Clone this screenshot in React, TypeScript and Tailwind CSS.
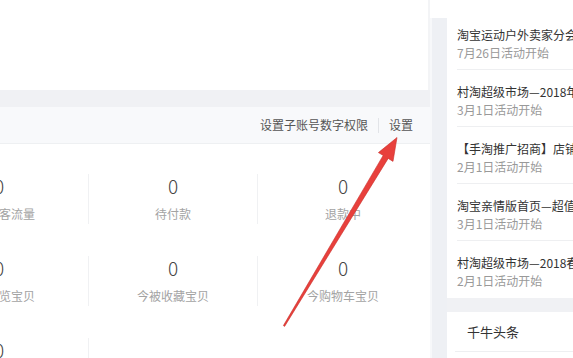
import React from "react";

const font = { fontFamily: '"Noto Sans CJK SC", "Noto Sans", sans-serif' };

type Stat = { value: string; label: string; line?: boolean };

const stats: Stat[][] = [
  [
    { value: "0", label: "今日访客流量" },
    { value: "0", label: "待付款", line: true },
    { value: "0", label: "退款中", line: true },
  ],
  [
    { value: "0", label: "今被浏览宝贝" },
    { value: "0", label: "今被收藏宝贝", line: true },
    { value: "0", label: "今购物车宝贝", line: true },
  ],
  [
    { value: "0", label: "" },
    { value: "", label: "", line: true },
    { value: "", label: "" },
  ],
];

const activities = [
  { title: "淘宝运动户外卖家分会场招商", date: "7月26日活动开始" },
  { title: "村淘超级市场—2018年货节", date: "3月1日活动开始" },
  { title: "【手淘推广招商】店铺精选", date: "2月1日活动开始" },
  { title: "淘宝亲情版首页—超值好货", date: "3月1日活动开始" },
  { title: "村淘超级市场—2018春茶节", date: "2月1日活动开始" },
];

function Arrow() {
  // red annotation arrow pointing at "设置"
  return (
    <svg
      className="pointer-events-none absolute left-0 top-0"
      width="573"
      height="358"
      viewBox="0 0 573 358"
    >
      <polygon
        points="284.6,326.4 388.2,158.4 393,161.4 397,137.5 378.4,152.6 383.2,155.4 283.4,325.6"
        fill="#e8403c"
        stroke="#c9302c"
        strokeWidth="0.6"
        strokeLinejoin="round"
      />
    </svg>
  );
}

export default function App() {
  return (
    <div
      className="relative flex h-[358px] w-[573px] overflow-hidden bg-[#f0f1f4]"
      style={font}
    >
      {/* Main column */}
      <div className="w-[430px] shrink-0 overflow-hidden">
        <div className="h-[90px] border-r-2 border-[#f3f4f6] bg-white" />
        <div className="mt-[17px] bg-white">
          {/* Card header */}
          <div className="flex h-[37px] items-center justify-end border-b border-[#eef0f2] bg-[#f8f9fb] pr-[17px] text-[12px] text-[#555]">
            <span>设置子账号数字权限</span>
            <span className="mx-[10px] h-[15px] w-px bg-[#e2e4e8]" />
            <span>设置</span>
          </div>
          {/* Stats grid */}
          <div className="ml-[-90px] flex w-[518px] flex-col gap-[32px] pt-[30px] pb-[20px]">
            {stats.map((row, i) => (
              <div key={i} className="grid grid-cols-[178px_169px_171px]">
                {row.map((s, j) => (
                  <div
                    key={j}
                    className={`flex h-[50px] flex-col items-center ${
                      s.line ? "border-l border-[#f0f1f3]" : ""
                    }`}
                  >
                    <span className="mt-[1px] text-[19px] leading-[22px] font-light text-[#444]">
                      {s.value}
                    </span>
                    <span className="mt-[9px] text-[12px] leading-[16px] text-[#a3a3a3]">
                      {s.label}
                    </span>
                  </div>
                ))}
              </div>
            ))}
          </div>
        </div>
      </div>

      {/* Gap strip */}
      <div className="flex w-[17px] shrink-0 flex-col">
        <div className="h-[18px] bg-white" />
        <div className="flex-1 border-l-2 border-[#f7f8fa] bg-[#eef0f4]" />
      </div>

      {/* Sidebar */}
      <div className="flex w-[200px] shrink-0 flex-col">
        <div className="bg-white pt-[13px]">
          {activities.map((a, i) => {
            const last = i === activities.length - 1;
            return (
              <div
                key={i}
                className={`mx-[10px] pt-[13px] ${
                  last ? "pb-[8px]" : "border-b border-[#eeeff1] pb-[7px]"
                }`}
              >
                <div className="whitespace-nowrap text-[12px] leading-[18px] text-[#333]">
                  {a.title}
                </div>
                <div className="whitespace-nowrap text-[12px] leading-[18px] text-[#999]">
                  {a.date}
                </div>
              </div>
            );
          })}
        </div>
        <div className="mt-[14px] flex-1 bg-white">
          <div className="mx-[8px] flex h-[40px] items-center border-b border-[#eeeff1] pl-[12px] text-[13px] text-[#333]">
            千牛头条
          </div>
        </div>
      </div>

      <Arrow />
    </div>
  );
}
